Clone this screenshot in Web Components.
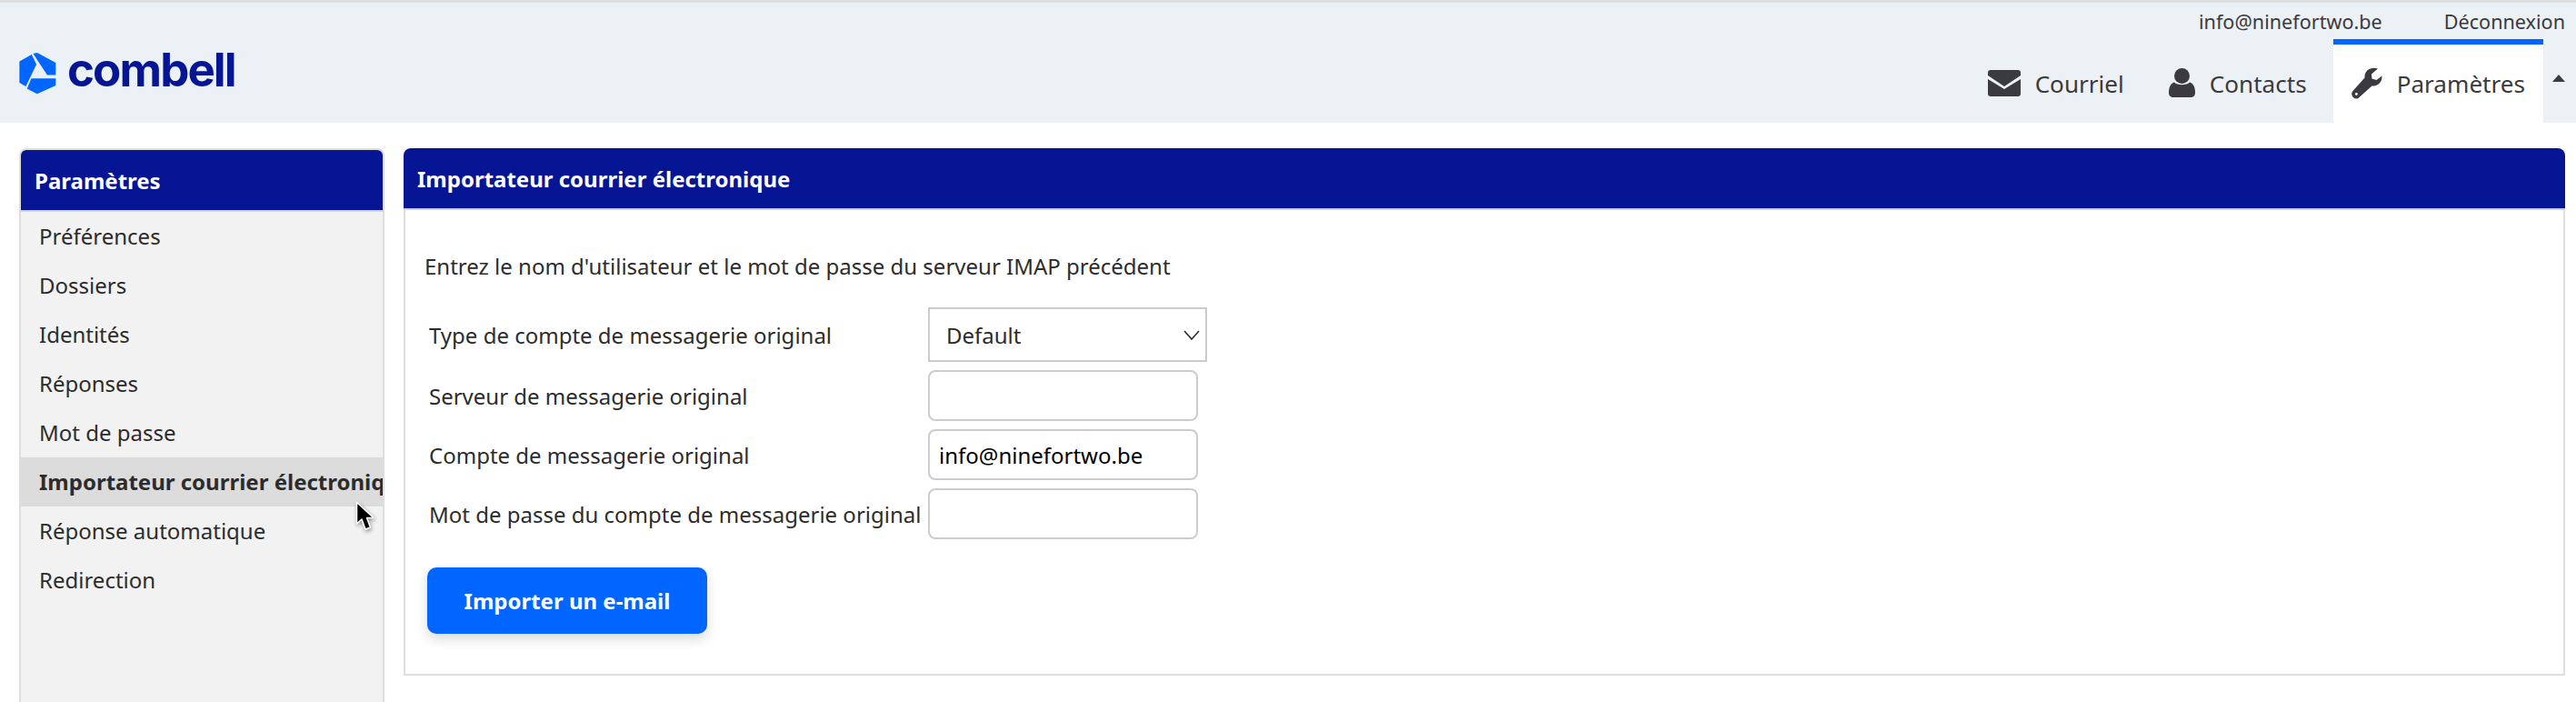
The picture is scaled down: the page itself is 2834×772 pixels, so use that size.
<!DOCTYPE html>
<html lang="fr">
<head>
<meta charset="utf-8">
<title>Paramètres</title>
<style>
  html, body { margin: 0; height: 100%; overflow: hidden; background: #fff; }
  body { font-family: "Noto Sans", sans-serif; font-size: 24px; color: #2c2c2c; position: relative; }
</style>
</head>
<body>
<app-header>
  <brand-logo slot="brand"></brand-logo>
  <span slot="account">info@ninefortwo.be</span>
  <span slot="account">Déconnexion</span>
  <nav-tab slot="tabs" icon="mail">Courriel</nav-tab>
  <nav-tab slot="tabs" icon="person">Contacts</nav-tab>
  <nav-tab slot="tabs" icon="wrench" selected>Paramètres</nav-tab>
</app-header>
<settings-page>
  <side-panel slot="side" heading="Paramètres">
    <side-item>Préférences</side-item>
    <side-item>Dossiers</side-item>
    <side-item>Identités</side-item>
    <side-item>Réponses</side-item>
    <side-item>Mot de passe</side-item>
    <side-item selected>Importateur courrier électronique</side-item>
    <side-item>Réponse automatique</side-item>
    <side-item>Redirection</side-item>
  </side-panel>
  <content-panel slot="main" heading="Importateur courrier électronique">
    <p>Entrez le nom d'utilisateur et le mot de passe du serveur IMAP précédent</p>
    <form-row label="Type de compte de messagerie original" type="select" value="Default"></form-row>
    <form-row label="Serveur de messagerie original"></form-row>
    <form-row label="Compte de messagerie original" value="info@ninefortwo.be"></form-row>
    <form-row label="Mot de passe du compte de messagerie original" type="password"></form-row>
    <action-button>Importer un e-mail</action-button>
  </content-panel>
</settings-page>
<mouse-cursor></mouse-cursor>

<script>
const headerTemplate = document.createElement("template");
headerTemplate.innerHTML = `
  <style>
    :host {
      display: flex;
      height: 132px;
      background: #ecf1f6;
      border-top: 3px solid #dedede;
      color: #3a3a40;
    }
    .brand { flex: 1; display: flex; align-items: center; padding: 22px 0 0 21px; }
    .right { display: flex; flex-direction: column; }
    .account {
      height: 40px;
      display: flex;
      justify-content: flex-end;
      align-items: center;
      gap: 68px;
      padding-right: 12px;
      font-size: 21.6px;
    }
    .tabs { flex: 1; display: flex; align-items: stretch; gap: 9px; }
    .toggle { width: 14px; margin: 39px 12px 0 1px; }
    .toggle svg { display: block; }
  </style>
  <div class="brand"><slot name="brand"></slot></div>
  <div class="right">
    <div class="account"><slot name="account"></slot></div>
    <div class="tabs">
      <slot name="tabs"></slot>
      <div class="toggle"><svg width="14" height="8" viewBox="0 0 14 8"><path d="M7 0 14 8H0z" fill="#3a3a40"/></svg></div>
    </div>
  </div>
`;
class AppHeader extends HTMLElement {
  constructor() {
    super();
    this.attachShadow({ mode: "open" });
    this.shadowRoot.appendChild(headerTemplate.content.cloneNode(true));
  }
}
customElements.define("app-header", AppHeader);

const logoTemplate = document.createElement("template");
logoTemplate.innerHTML = `
  <style>
    :host { display: flex; align-items: center; gap: 12px; }
    svg { display: block; flex: none; }
    span {
      font-family: Inter, sans-serif;
      font-weight: 700;
      font-size: 51px;
      line-height: 50px;
      letter-spacing: -1.9px;
      color: #061593;
      position: relative;
      top: -3px;
    }
  </style>
  <svg width="41" height="47" viewBox="63 174 122 140" fill="#0066ff">
    <path d="M64 205 104 183 120 215 85 287 64 275z"/>
    <path d="M109 180 122 177 183 210V250H155z"/>
    <path d="M103 261H183V284L122 312 89 295z"/>
  </svg>
  <span>combell</span>
`;
class BrandLogo extends HTMLElement {
  constructor() {
    super();
    this.attachShadow({ mode: "open" });
    this.shadowRoot.appendChild(logoTemplate.content.cloneNode(true));
  }
}
customElements.define("brand-logo", BrandLogo);

const tabIcons = {
  mail: `<svg width="36" height="29" viewBox="0 0 36 29" fill="currentColor">
    <path d="M3 0H33a3 3 0 0 1 3 3V6L18 18 0 6V3A3 3 0 0 1 3 0z"/>
    <path d="M0 10 18 21 36 10V26a3 3 0 0 1-3 3H3a3 3 0 0 1-3-3z"/>
  </svg>`,
  person: `<svg width="29" height="32" viewBox="0 0 29 32" fill="currentColor">
    <circle cx="14.5" cy="8.5" r="8.5"/>
    <path d="M6 15.5C9 19 20 19 23 15.5 27 16.500 29 21 29 27 29 30 27 32 24 32H5C2 32 0 30 0 27 0 21 2 16.500 6 15.500z"/>
  </svg>`,
  wrench: `<svg width="34" height="35" viewBox="0 0 34 35" fill="currentColor">
    <path fill-rule="evenodd" d="M29 1.500C22-1 14 3 14.500 11.500L1.500 26C-.5 28.500 0 31 2 33 4 35 6.500 35 8.500 33L22.500 20.500C29 21 34 16 33.500 9.500L27.500 14 22.500 12.500 22 7.500zM4 29.500a1.400 1.400 0 1 0 2.800 0 1.400 1.400 0 1 0-2.800 0z"/>
  </svg>`,
};

const tabTemplate = document.createElement("template");
tabTemplate.innerHTML = `
  <style>
    :host {
      display: flex;
      align-items: center;
      gap: 16px;
      padding: 0 20px;
      border-top: 6px solid transparent;
      font-size: 26.1px;
      color: #3a3a40;
    }
    :host([selected]) { background: #fff; border-top-color: #0066ff; }
    .icon { display: flex; position: relative; top: -1px; }
  </style>
  <span class="icon"></span>
  <slot></slot>
`;
class NavTab extends HTMLElement {
  constructor() {
    super();
    this.attachShadow({ mode: "open" });
    this.shadowRoot.appendChild(tabTemplate.content.cloneNode(true));
  }

  connectedCallback() {
    this.shadowRoot.querySelector(".icon").innerHTML = tabIcons[this.getAttribute("icon")];
  }
}
customElements.define("nav-tab", NavTab);

const pageTemplate = document.createElement("template");
pageTemplate.innerHTML = `
  <style>
    :host {
      display: flex;
      align-items: flex-start;
      gap: 21px;
      padding: 28px 12px 0 21px;
    }
  </style>
  <slot name="side"></slot>
  <slot name="main"></slot>
`;
class SettingsPage extends HTMLElement {
  constructor() {
    super();
    this.attachShadow({ mode: "open" });
    this.shadowRoot.appendChild(pageTemplate.content.cloneNode(true));
  }
}
customElements.define("settings-page", SettingsPage);

const sideTemplate = document.createElement("template");
sideTemplate.innerHTML = `
  <style>
    :host {
      display: block;
      flex: none;
      box-sizing: border-box;
      width: 402px;
      height: 640px;
      background: #f2f2f2;
      border: 2px solid #dedede;
      border-bottom: 0;
      border-radius: 8px 8px 0 0;
    }
    h2 {
      margin: 0;
      height: 66px;
      padding: 0 15px;
      display: flex;
      align-items: center;
      background: #061593;
      color: #fff;
      font-size: 24px;
      font-weight: 700;
      border-radius: 6px 6px 0 0;
      border-bottom: 2px solid #d4d4d4;
    }
  </style>
  <h2></h2>
  <slot></slot>
`;
class SidePanel extends HTMLElement {
  constructor() {
    super();
    this.attachShadow({ mode: "open" });
    this.shadowRoot.appendChild(sideTemplate.content.cloneNode(true));
  }

  connectedCallback() {
    this.shadowRoot.querySelector("h2").textContent = this.getAttribute("heading");
  }
}
customElements.define("side-panel", SidePanel);

const itemTemplate = document.createElement("template");
itemTemplate.innerHTML = `
  <style>
    :host {
      display: block;
      height: 54px;
      line-height: 54px;
      padding-left: 20px;
      white-space: nowrap;
      overflow: hidden;
      font-size: 24px;
      color: #2c2c2c;
    }
    :host([selected]) { background: #dcdcdc; font-weight: 700; }
  </style>
  <slot></slot>
`;
class SideItem extends HTMLElement {
  constructor() {
    super();
    this.attachShadow({ mode: "open" });
    this.shadowRoot.appendChild(itemTemplate.content.cloneNode(true));
  }
}
customElements.define("side-item", SideItem);

const contentTemplate = document.createElement("template");
contentTemplate.innerHTML = `
  <style>
    :host { display: block; flex: 1; min-width: 0; }
    h2 {
      margin: 0;
      box-sizing: border-box;
      height: 68px;
      padding: 0 15px;
      display: flex;
      align-items: center;
      background: #061593;
      color: #fff;
      font-size: 24px;
      font-weight: 700;
      border-radius: 8px 8px 0 0;
      border-bottom: 2px solid #cfcfcf;
    }
    .body {
      box-sizing: border-box;
      height: 512px;
      padding: 42px 26px 0;
      border: 2px solid #dedede;
      border-top: 0;
      display: flex;
      flex-direction: column;
      gap: 9px;
      align-items: flex-start;
    }
    ::slotted(p) {
      margin: 0 0 16px -5px;
      line-height: 40px;
      font-size: 24px;
      color: #2c2c2c;
    }
  </style>
  <h2></h2>
  <div class="body"><slot></slot></div>
`;
class ContentPanel extends HTMLElement {
  constructor() {
    super();
    this.attachShadow({ mode: "open" });
    this.shadowRoot.appendChild(contentTemplate.content.cloneNode(true));
  }

  connectedCallback() {
    this.shadowRoot.querySelector("h2").textContent = this.getAttribute("heading");
  }
}
customElements.define("content-panel", ContentPanel);

const rowTemplate = document.createElement("template");
rowTemplate.innerHTML = `
  <style>
    :host {
      display: grid;
      grid-template-columns: 549px auto;
      align-items: center;
      font-size: 24px;
      color: #2c2c2c;
    }
    label { white-space: nowrap; }
    input, select {
      box-sizing: border-box;
      font: inherit;
      color: #000;
      background: #fff;
      border: 2px solid #cccccc;
      margin: 0;
      outline: none;
    }
    input {
      width: 297px;
      height: 56px;
      padding: 0 10px;
      border-radius: 8px;
    }
    .select { position: relative; display: flex; }
    select {
      appearance: none;
      width: 307px;
      height: 60px;
      padding: 0 18px;
      border-radius: 0;
      color: #2c2c2c;
    }
    .select svg { position: absolute; right: 8px; top: 25px; pointer-events: none; }
  </style>
  <label></label>
`;
class FormRow extends HTMLElement {
  constructor() {
    super();
    this.attachShadow({ mode: "open" });
    this.shadowRoot.appendChild(rowTemplate.content.cloneNode(true));
  }

  connectedCallback() {
    this.shadowRoot.querySelector("label").textContent = this.getAttribute("label");
    const type = this.getAttribute("type") || "text";
    const value = this.getAttribute("value") || "";
    if (type === "select") {
      const wrap = document.createElement("div");
      wrap.className = "select";
      const field = document.createElement("select");
      field.add(new Option(value));
      wrap.appendChild(field);
      wrap.insertAdjacentHTML("beforeend", `<svg width="18" height="11" viewBox="0 0 18 11"><path d="M1 1 9 10 17 1" fill="none" stroke="#2c2c2c" stroke-width="1.6"/></svg>`);
      this.shadowRoot.appendChild(wrap);
    } else {
      const field = document.createElement("input");
      field.type = type;
      field.value = value;
      this.shadowRoot.appendChild(field);
    }
  }
}
customElements.define("form-row", FormRow);

const buttonTemplate = document.createElement("template");
buttonTemplate.innerHTML = `
  <style>
    :host { display: block; margin-top: 22px; margin-left: -2px; }
    button {
      box-sizing: border-box;
      width: 308px;
      height: 73px;
      border: 0;
      border-radius: 10px;
      background: #0066ff;
      color: #fff;
      font: 700 24px "Noto Sans", sans-serif;
      box-shadow: 0 6px 14px rgba(0, 0, 0, .14);
    }
  </style>
  <button type="button"><slot></slot></button>
`;
class ActionButton extends HTMLElement {
  constructor() {
    super();
    this.attachShadow({ mode: "open" });
    this.shadowRoot.appendChild(buttonTemplate.content.cloneNode(true));
  }
}
customElements.define("action-button", ActionButton);

// the pointer sits over the sidebar, so it is the one thing placed by hand
const cursorTemplate = document.createElement("template");
cursorTemplate.innerHTML = `
  <style>
    :host { position: absolute; left: 391px; top: 551px; display: block; width: 24px; height: 36px; }
    svg { display: block; filter: drop-shadow(1px 2px 2px rgba(0, 0, 0, .4)); }
  </style>
  <svg width="24" height="36" viewBox="0 0 24 36">
    <path d="M1.500 1.500V25L7 20 11 31 16.500 29 12.500 18.500H20z" fill="#000" stroke="#fff" stroke-width="1.500" stroke-linejoin="round"/>
  </svg>
`;
class MouseCursor extends HTMLElement {
  constructor() {
    super();
    this.attachShadow({ mode: "open" });
    this.shadowRoot.appendChild(cursorTemplate.content.cloneNode(true));
  }
}
customElements.define("mouse-cursor", MouseCursor);
</script>
</body>
</html>
